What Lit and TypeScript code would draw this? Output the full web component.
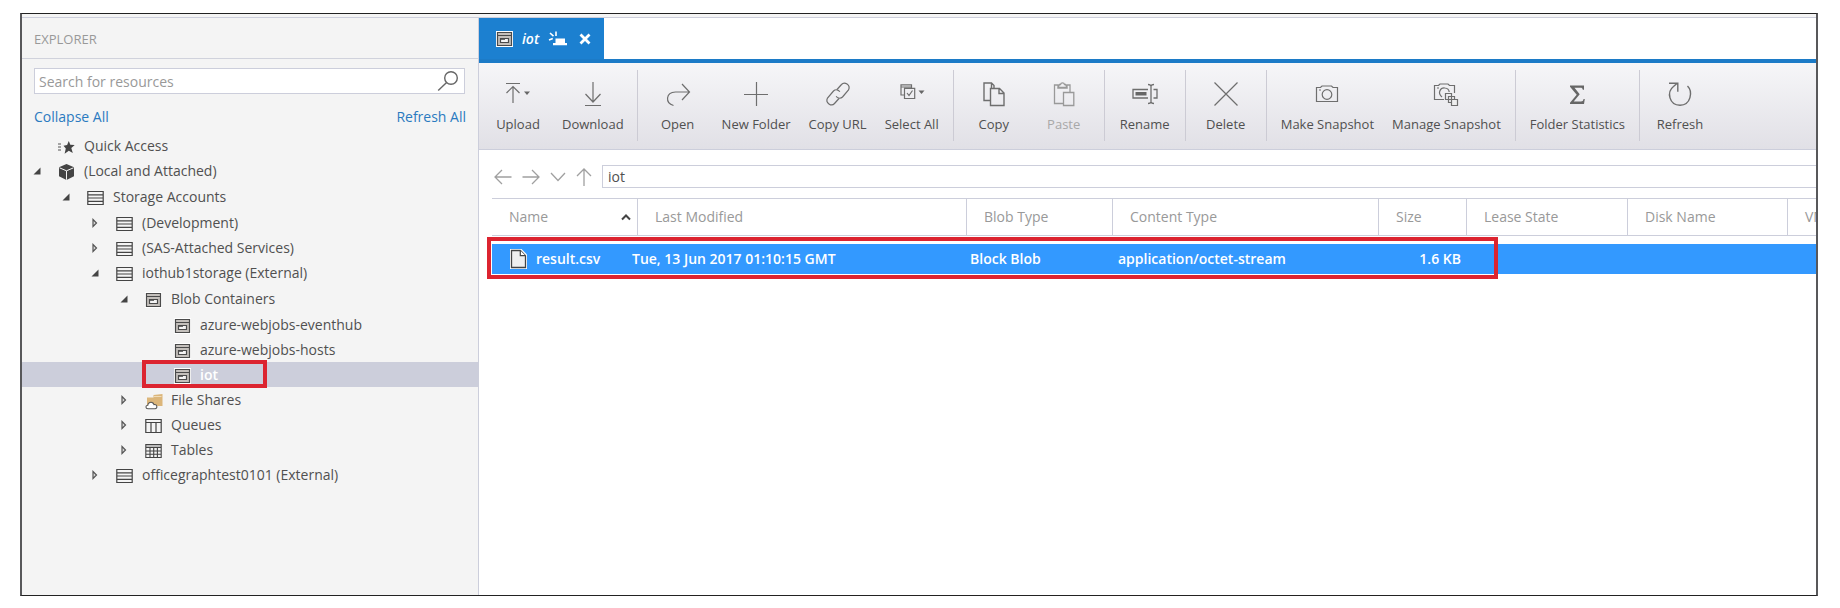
import { LitElement, html, svg, css, nothing, TemplateResult } from "lit";
import { customElement, property, state } from "lit/decorators.js";
import { classMap } from "lit/directives/class-map.js";
import { styleMap } from "lit/directives/style-map.js";

type Icon = { w: number; h: number; body: TemplateResult };

const icon = (w: number, h: number, body: TemplateResult): Icon => ({ w, h, body });

const container = svg`
  <path fill="#fff" d="M0 0h17v16H0z"/>
  <path fill="#c4c0bc" d="M1 1h15v14H1z"/>
  <path fill="none" stroke="#4a4a4a" stroke-width="1.200" d="M1.500 1.500h14v13h-14zM1 4.500h15"/>
  <path fill="#f4f4f4" stroke="#4a4a4a" stroke-width="1.200" d="M4.500 7.500h8v4h-8z"/>
  <path fill="#4a4a4a" d="M4 7h5v1.800H4z"/>`;

const ICONS: Record<string, Icon> = {
  star: icon(17, 16, svg`
    <path stroke="#555" stroke-width="1.200" d="M0 5h3M0 8h3M0 11h3"/>
    <path fill="#444" d="M10.800 2l1.500 3.800 4.400.2-3.400 3.100 1.500 4.800-4-2.200-4.200 3 1.200-5.200-2.300-2.800 3.600-.6z"/>`),
  cube: icon(17, 18, svg`
    <path fill="#444" d="M8.500 1l7.500 3.300v8.900L8.500 17 1 13.200V4.300z"/>
    <path fill="none" stroke="#f4f4f4" stroke-width="1" d="M1.500 4.800l7 3 7-3M8.500 7.800v9"/>`),
  account: icon(17, 16, svg`
    <path fill="none" stroke="#444" stroke-width="1.200" d="M.800 1.500h15.400v13H.800zM1 4.800h15M1 8h15M1 11.300h15"/>`),
  container: icon(17, 16, container),
  share: icon(18, 17, svg`
    <path fill="#dcb67a" d="M2 4.500h6.500V2L17.500 1v12H2z"/>
    <path stroke="#f0dcb8" d="M9 3.500h7.500"/>
    <path fill="#fff" stroke="#555" stroke-width="1.100" d="M3 15.800c-2.600-.2-2.800-3.400-.2-3.600.2-2.200 2.400-3.600 4.400-2.600 1 .3 1.500 1.100 1.800 2 3.200-.4 4 3.800 1 4.200z"/>`),
  queue: icon(17, 16, svg`
    <path fill="none" stroke="#444" stroke-width="1.200" d="M.800 1.500h15.400v13H.800zM1 4.500h15M6 4.500v10M11 4.500v10"/>`),
  table: icon(17, 16, svg`
    <path fill="#bbb" d="M1 1h15v3H1z"/>
    <path fill="none" stroke="#444" stroke-width="1.100" d="M.800 1.500h15.400v13H.800zM1 4.500h15M1 8h15M1 11.300h15M5 4.500v10M8.700 4.500v10M12.400 4.500v10"/>`),
  file: icon(17, 20, svg`
    <path fill="#fff" d="M0 0h11.500l5.500 5.500V20H0z"/>
    <path fill="#efefef" stroke="#444" stroke-width="1.300" d="M1.500 1.500h8.800l5.200 5.200v11.800h-14z"/>
    <path fill="#fff" stroke="#444" stroke-width="1.200" d="M10.300 1.500v5.200h5.200"/>`),
  open: icon(8, 8, svg`<path fill="#444" d="M7.500.500v7H.500z"/>`),
  closed: icon(6, 10, svg`<path fill="#ddd" stroke="#555" stroke-width="1.200" d="M1 1.500L4.500 5 1 8.500z"/>`),
  search: icon(22, 22, svg`<g fill="none" stroke="#666" stroke-width="1.400"><circle cx="14" cy="8" r="6.300"/><path d="M9.600 12.400L1.200 20.600"/></g>`),
  pin: icon(20, 16, svg`
    <path fill="#fff" d="M7.500 7.500H17V12h2v2.200H5V12h2.500z"/>
    <path stroke="#fff" stroke-width="1.600" d="M8 .500V5M2 2l3.500 3.200M1 9l3.800-1.500"/>`),
  close: icon(12, 12, svg`<path stroke="#fff" stroke-width="2.800" d="M1.500 1.500l9 9M10.500 1.500l-9 9"/>`),
  back: icon(18, 18, svg`<path d="M17.500 9H1M8 2L1 9l7 7"/>`),
  forward: icon(18, 18, svg`<path d="M.500 9H17M10 2l7 7-7 7"/>`),
  down: icon(16, 18, svg`<path d="M1 5l7 7.500L15 5"/>`),
  up: icon(16, 18, svg`<path d="M8 18V1M1 8l7-7 7 7"/>`),
  sort: icon(10, 8, svg`<path fill="none" stroke="#444" stroke-width="2" d="M1 6.500l4-4 4 4"/>`),
  upload: icon(26, 24, svg`<path d="M1 1.500h14M8 21V4.500M1.500 11L8 4.500l6.500 6.500"/><path class="solid" d="M19 9.500h6l-3 3.500z"/>`),
  download: icon(18, 24, svg`<path d="M9 0v20M1.500 12L9 20l7.500-8M1 23.500h16"/>`),
  redo: icon(24, 24, svg`<path d="M23 10H9.500C-.5 10.500-1 21 7.500 23.500M16 2l7.500 8-7.500 8"/>`),
  plus: icon(24, 24, svg`<path d="M0 12.500h24M12.500 0v24"/>`),
  link: icon(24, 24, svg`
    <path d="M11 7.500l4.500-5c3-3.500 9.500.5 7 5.500l-6 7c-2 2-5 1.500-6.300-.8"/>
    <path d="M13 16.500l-4.500 5c-3 3.500-9.500-.5-7-5.500l6-7c2-2 5-1.500 6.300.8"/>`),
  select: icon(26, 24, svg`<path d="M5 13H2V2.800h10.500V6M2 5h10.500M5.500 6.300h10.200v10.200H5.500zM8 11l2 2.500 3.500-5"/><path class="solid" d="M19.500 8.500h6l-3 3.500z"/>`),
  copy: icon(24, 24, svg`<path stroke-width="1.400" d="M8.500 18.500H2V1h7.500L12 3.500V6M8.500 6.500h9l4.500 4.500v12.500H8.500zM17 6.500v5h5M9.500 1v5"/>`),
  paste: icon(24, 24, svg`<path stroke-width="1.300" d="M11 21.500H2.500V3H6v3h9V3h3v7M6 5.500l1.500-3h1c.5-2.200 3.500-2.200 4 0h1l1.500 3zM11.500 10.500h10.300v13H11.500z"/>`),
  rename: icon(26, 24, svg`<path stroke-width="1.300" d="M16 7.500H1v8.500h15M21.500 7.500h3.500v8.500h-3.500M16 2.500c2 0 2.700.5 3 1.500v16c-.3 1-1 1.500-3 1.500M22 2.500c-2 0-2.700.5-3 1.500M22 21.500c-2 0-2.700-.5-3-1.500"/><path class="solid" d="M3.500 10h11v3.500h-11z"/>`),
  cross: icon(24, 24, svg`<path d="M.500.500l23 23M23.500.500l-23 23"/>`),
  camera: icon(24, 24, svg`<path d="M1.500 5.500h4L7 4h9.500l1.500 1.500h4.500v14h-21zM4 8h2"/><circle cx="12" cy="12.500" r="4.800"/>`),
  cameras: icon(26, 24, svg`<path d="M11 17.500H1.500V3.500h4L7 2h8l1.500 1.500h5V11M4 6h2M9 15c-5-4-1.500-9.500 2.800-9 2.700.2 4.200 2 4.400 4"/><path d="M12.500 11.500h6v6h-6zM15.500 14.500h6v6h-6z"/><path fill="#eee" d="M18.500 17.500h6v6h-6z"/>`),
  sigma: icon(18, 24, svg`<path class="solid" d="M2 3.500h14v4.300h-1.200c-.3-1.600-.9-2-2.300-2H6.500l5.200 6.400-6 7.300h7.300c1.500 0 2.200-.8 2.600-2.500h1.200L16 22H2v-1.300l6.700-8L2 4.800z"/>`),
  refresh: icon(24, 24, svg`<path stroke-width="1.400" d="M19.500 4c5.500 5.500 3.500 19-7.500 19.300C1 23-1.500 10 5.500 4.500L9.500 1M1 1.300h8.800v8.500"/>`),
};

const draw = (name: string) => {
  const { w, h, body } = ICONS[name];
  return html`<svg width=${w} height=${h} viewBox="0 0 ${w} ${h}" aria-hidden="true">${body}</svg>`;
};

interface TreeNode {
  label: string;
  icon: string;
  open?: boolean;
  closed?: boolean;
  children?: TreeNode[];
}

const TREE: TreeNode[] = [
  { label: "Quick Access", icon: "star" },
  {
    label: "(Local and Attached)", icon: "cube", open: true, children: [
      {
        label: "Storage Accounts", icon: "account", open: true, children: [
          { label: "(Development)", icon: "account", closed: true },
          { label: "(SAS-Attached Services)", icon: "account", closed: true },
          {
            label: "iothub1storage (External)", icon: "account", open: true, children: [
              {
                label: "Blob Containers", icon: "container", open: true, children: [
                  { label: "azure-webjobs-eventhub", icon: "container" },
                  { label: "azure-webjobs-hosts", icon: "container" },
                  { label: "iot", icon: "container" },
                ],
              },
              { label: "File Shares", icon: "share", closed: true },
              { label: "Queues", icon: "queue", closed: true },
              { label: "Tables", icon: "table", closed: true },
            ],
          },
          { label: "officegraphtest0101 (External)", icon: "account", closed: true },
        ],
      },
    ],
  },
];

@customElement("resource-explorer")
export class ResourceExplorer extends LitElement {
  @property() selected = "iot";

  static styles = css`
    :host { display: block; background: #f4f4f4; border-right: 1px solid #cccedb; }
    h2 {
      margin: 0; padding: 0 12px; font-size: 13px; font-weight: 400; line-height: 42px;
      height: 40px; color: #999; border-bottom: 1px solid #d0d2dc;
    }
    .search {
      display: flex; align-items: center; margin: 9px 13px 0 12px; height: 24px;
      background: #fff; border: 1px solid #cccedb; padding-right: 5px;
    }
    .search input {
      flex: 1; min-width: 0; border: 0; outline: 0; background: none; padding: 2px 4px 0;
      font: inherit; line-height: 20px; color: #555;
    }
    .search input::placeholder { color: #999; opacity: 1; }
    .search button { border: 0; background: none; padding: 0; display: flex; }
    .links { display: flex; justify-content: space-between; padding: 13px 12px 5px; line-height: 20px; }
    .links a { color: #2a7ac0; text-decoration: none; }
    ul { list-style: none; margin: 0; padding: 1px 0 0; }
    .row {
      position: relative; display: flex; align-items: center; height: 25px; line-height: 25px;
      padding-left: calc(8px + var(--depth) * 29px); color: #505050; white-space: nowrap;
    }
    .twisty { width: 14px; display: flex; justify-content: center; flex: none; }
    .glyph { width: 18px; margin: 3px 8px 0 14px; display: flex; flex: none; }
    .selected { background: #cccedb; color: #fff; font-weight: 600; }
    .mark { position: absolute; left: 120px; top: -2px; width: 117px; height: 20px; border: 4px solid #dc2430; }
    svg { display: block; }
  `;

  private node(n: TreeNode, depth: number): TemplateResult {
    const on = n.label === this.selected;
    return html`<li role="treeitem" aria-selected=${on} aria-expanded=${n.children ? "true" : n.closed ? "false" : nothing}>
      <div class=${classMap({ row: true, selected: on })} style=${styleMap({ "--depth": String(depth) })}
        @click=${() => (this.selected = n.label)}>
        <span class="twisty">${n.open ? draw("open") : n.closed ? draw("closed") : nothing}</span>
        <span class="glyph">${draw(n.icon)}</span>
        <span>${n.label}</span>
        ${on ? html`<span class="mark"></span>` : nothing}
      </div>
      ${n.children ? html`<ul role="group">${n.children.map((c) => this.node(c, depth + 1))}</ul>` : nothing}
    </li>`;
  }

  render() {
    return html`
      <h2>EXPLORER</h2>
      <div class="search">
        <input type="text" aria-label="Search for resources" placeholder="Search for resources" />
        <button aria-label="Search">${draw("search")}</button>
      </div>
      <div class="links"><a href="#collapse">Collapse All</a><a href="#refresh">Refresh All</a></div>
      <ul role="tree">${TREE.map((n) => this.node(n, 0))}</ul>
    `;
  }
}

const TOOLS: { label: string; icon: string; disabled?: boolean }[][] = [
  [{ label: "Upload", icon: "upload" }, { label: "Download", icon: "download" }],
  [
    { label: "Open", icon: "redo" }, { label: "New Folder", icon: "plus" },
    { label: "Copy URL", icon: "link" }, { label: "Select All", icon: "select" },
  ],
  [{ label: "Copy", icon: "copy" }, { label: "Paste", icon: "paste", disabled: true }],
  [{ label: "Rename", icon: "rename" }],
  [{ label: "Delete", icon: "cross" }],
  [{ label: "Make Snapshot", icon: "camera" }, { label: "Manage Snapshot", icon: "cameras" }],
  [{ label: "Folder Statistics", icon: "sigma" }],
  [{ label: "Refresh", icon: "refresh" }],
];

@customElement("tool-bar")
export class ToolBar extends LitElement {
  static styles = css`
    :host {
      display: flex; padding: 7px 0 8px; border-bottom: 1px solid #cccedb;
      background: linear-gradient(#f6f6f8, #e1e0e6);
    }
    .group { display: flex; padding: 0 5px; border-right: 1px solid #cccbd4; }
    .group:first-child { padding: 0 4px; }
    .group:last-child { border: 0; }
    button {
      display: flex; flex-direction: column; align-items: center; min-width: 70px; padding: 12px 9px 7px;
      gap: 8px; border: 0; background: none; font: inherit; font-size: 13px; line-height: 20px; color: #505050;
      white-space: nowrap;
    }
    button:disabled { color: #a8a8a8; }
    svg { display: block; fill: none; stroke: #6e6e6e; stroke-width: 1.2; overflow: visible; }
    button:disabled svg { stroke: #999; }
    svg .solid { fill: #666; stroke: none; }
  `;

  render() {
    return TOOLS.map((g) => html`<div class="group">
      ${g.map((t) => html`<button ?disabled=${t.disabled ?? false}>${draw(t.icon)}<span>${t.label}</span></button>`)}
    </div>`);
  }
}

const COLUMNS = ["Name", "Last Modified", "Blob Type", "Content Type", "Size", "Lease State", "Disk Name", "VM Name"];

@customElement("blob-list")
export class BlobList extends LitElement {
  static styles = css`
    :host { display: block; padding: 0 0 8px 13px; overflow: hidden; }
    table, thead, tbody { display: block; }
    tr { display: grid; }
    th, td { padding: 0; font-weight: inherit; text-align: left; white-space: nowrap; }
    .head {
      grid-template-columns: 146px 329px 146px 266px 88px 161px 160px minmax(0, 1fr);
      border-top: 1px solid #cccedb; border-bottom: 1px solid #cccedb; line-height: 36px; color: #999;
    }
    .head th { display: flex; align-items: center; justify-content: space-between; padding: 0 6px 0 17px; border-right: 1px solid #cccedb; }
    .head th:last-child { border: 0; padding-right: 0; }
    .file {
      position: relative; grid-template-columns: 140px 338px 148px 268px 75px 1fr; margin-top: 8px;
      background: #3399ff; color: #fff; font-weight: 600; line-height: 30px;
    }
    .name { display: flex; align-items: center; gap: 9px; padding-left: 18px; }
    .file .size { text-align: right; }
    .mark { position: absolute; left: -5px; top: -7px; width: 1003px; height: 34px; border: 4px solid #dc2430; }
    svg { display: block; }
  `;

  render() {
    return html`<table>
      <thead><tr class="head">
        ${COLUMNS.map((c, i) => html`<th scope="col">${c}${i === 0 ? draw("sort") : nothing}</th>`)}
      </tr></thead>
      <tbody><tr class="file">
        <td class="name">${draw("file")}<span>result.csv</span></td>
        <td>Tue, 13 Jun 2017 01:10:15 GMT</td>
        <td>Block Blob</td>
        <td>application/octet-stream</td>
        <td class="size">1.6 KB</td>
        <td><span class="mark"></span></td>
      </tr></tbody>
    </table>`;
  }
}

@customElement("app-root")
export class AppRoot extends LitElement {
  @state() private path = "iot";

  static styles = css`
    :host {
      display: flex; box-sizing: border-box; min-height: 100vh; padding: 13px 22px 12px 20px; background: #fff;
      font: 14px "Open Sans", "Noto Sans", sans-serif; color: #505050;
    }
    .frame {
      flex: 1; min-width: 0; display: flex; flex-direction: column; overflow: hidden;
      border: solid #58585a; border-width: 1px 2px; border-top-color: #222; border-bottom-color: #222;
    }
    .strip { height: 3px; background: #f4f4f4; border-bottom: 1px solid #cccedb; }
    .body { flex: 1; display: grid; grid-template-columns: 457px minmax(0, 1fr); }
    .tabs { display: flex; height: 41px; border-bottom: 4px solid #1c7bc7; }
    .tab {
      display: flex; align-items: center; padding: 0 13px 0 17px; background: #1c80d0;
      color: #fff; font-style: italic; font-weight: 600;
    }
    .tab span { margin: 0 9px 0 9px; }
    .tab button { display: flex; border: 0; padding: 0; background: none; margin-left: 11px; }
    .tab button.pin { margin-left: 0; }
    .address { display: flex; align-items: center; padding: 15px 0 10px 15px; }
    .address button { display: flex; border: 0; padding: 0; background: none; margin-right: 10px; }
    .address svg { fill: none; stroke: #a0a0a0; stroke-width: 1.3; }
    .address input {
      flex: 1; min-width: 0; height: 23px; box-sizing: border-box; border: 1px solid #cccedb; border-right: 0;
      outline: 0; padding: 0 5px; font: inherit; color: #505050;
    }
    svg { display: block; }
  `;

  render() {
    return html`<div class="frame">
      <div class="strip"></div>
      <div class="body">
        <resource-explorer></resource-explorer>
        <main>
          <div class="tabs"><div class="tab">
            ${draw("container")}<span>iot</span>
            <button class="pin" aria-label="Keep open">${draw("pin")}</button>
            <button aria-label="Close">${draw("close")}</button>
          </div></div>
          <tool-bar></tool-bar>
          <div class="address">
            <button aria-label="Back">${draw("back")}</button>
            <button aria-label="Forward">${draw("forward")}</button>
            <button aria-label="History">${draw("down")}</button>
            <button aria-label="Up">${draw("up")}</button>
            <input type="text" aria-label="Path" .value=${this.path} />
          </div>
          <blob-list></blob-list>
        </main>
      </div>
    </div>`;
  }
}
